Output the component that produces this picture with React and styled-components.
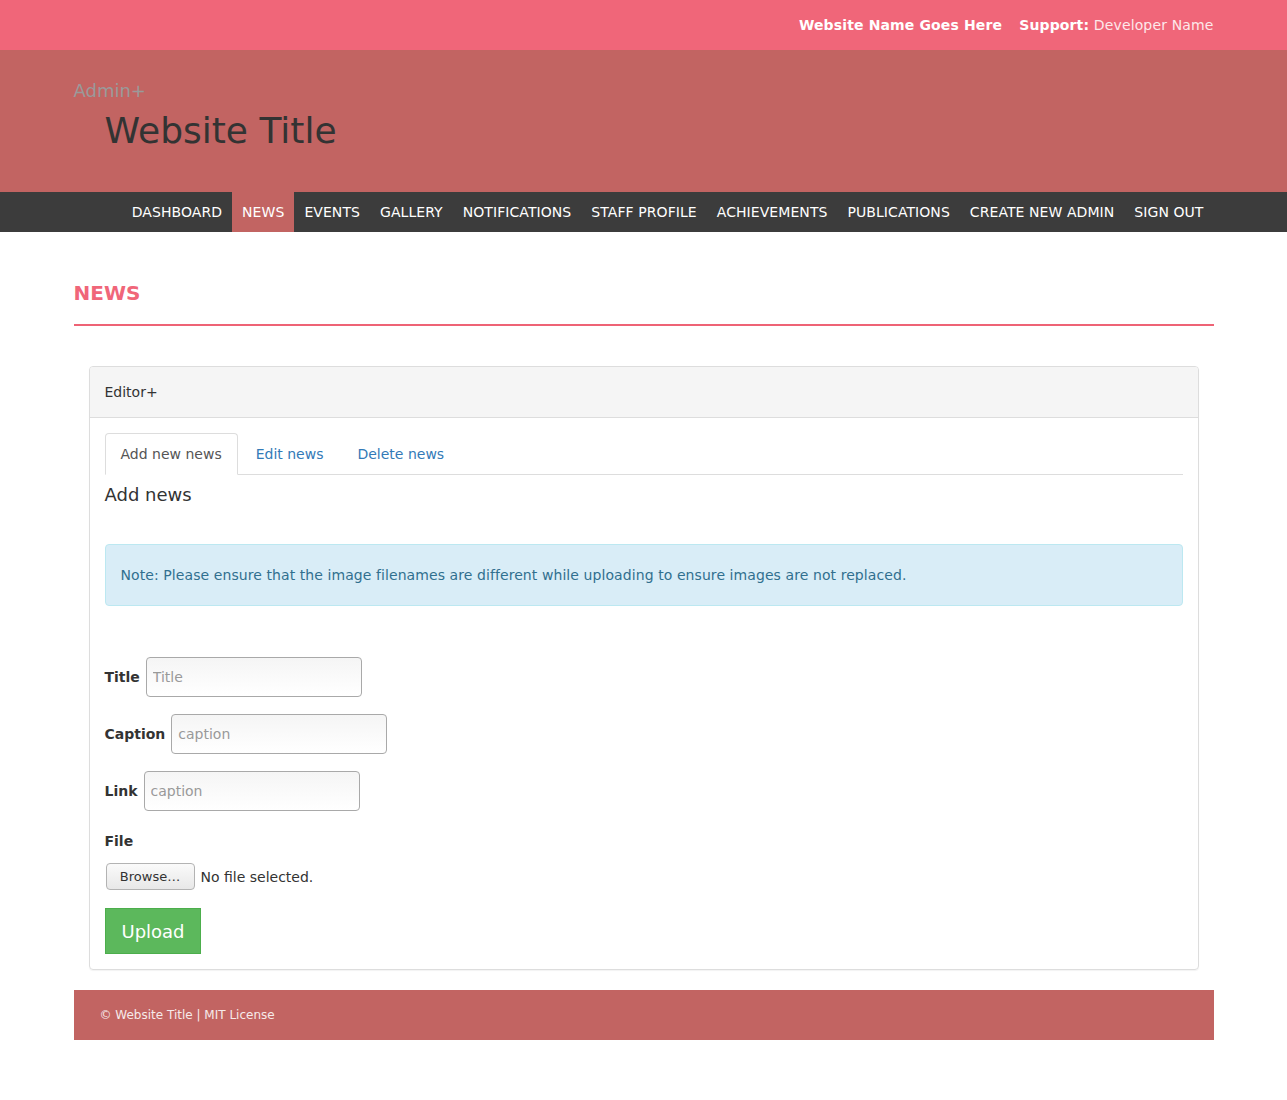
import React from 'react';
import styled, { createGlobalStyle } from 'styled-components';

const GlobalStyle = createGlobalStyle`
  body {
    margin: 0;
    font-family: "DejaVu Sans", "Liberation Sans", sans-serif;
    font-size: 14px;
    color: #333;
    background: #fff;
  }
  * { box-sizing: border-box; }
`;

const Container = styled.div`
  width: 1140px;
  margin: 0 auto;
`;

const TopBar = styled.div`
  background: #f06679;
  height: 50px;
`;

const TopBarInner = styled(Container)`
  height: 100%;
  display: flex;
  align-items: center;
  justify-content: flex-end;
  gap: 17px;
  color: #fff;
  font-size: 14px;
  letter-spacing: 0.14px;
`;

const TopItem = styled.span`
  font-weight: ${p => (p.$bold ? 'bold' : 'normal')};
  b { font-weight: bold; }
  em { font-style: normal; color: #fde8ea; }
`;

const Header = styled.header`
  background: #c26462;
  height: 142px;
`;

const HeaderInner = styled(Container)`
  padding-top: 30px;
`;

const Brand = styled.div`
  font-size: 18px;
  line-height: 22px;
  color: #9a9a9a;
`;

const SiteTitle = styled.h1`
  margin: 9px 0 0 31px;
  font-size: 36px;
  line-height: 40px;
  font-weight: normal;
  color: #333;
`;

const NavBar = styled.nav`
  background: #3c3c3c;
  height: 40px;
`;

const NavList = styled(Container)`
  display: flex;
  justify-content: flex-end;
  height: 100%;
`;

const NavItem = styled.a`
  display: flex;
  align-items: center;
  padding: 0 10px 1px;
  color: #fff;
  text-decoration: none;
  font-size: 14px;
  letter-spacing: 0.07px;
  background: ${p => (p.$active ? '#c26462' : 'transparent')};
`;

const Main = styled(Container)`
  padding-top: 49px;
`;

const PageHeading = styled.h2`
  margin: 0;
  font-size: 20px;
  line-height: 24px;
  font-weight: bold;
  color: #f06679;
  padding-bottom: 19px;
  border-bottom: 2px solid #ee6375;
`;

const Panel = styled.section`
  margin: 40px 15px 0;
  border: 1px solid #ddd;
  border-radius: 4px;
  box-shadow: 0 1px 1px rgba(0, 0, 0, 0.05);
`;

const PanelHeading = styled.div`
  background: #f5f5f5;
  border-bottom: 1px solid #ddd;
  padding: 15px;
  line-height: 20px;
  font-size: 14px;
  border-radius: 3px 3px 0 0;
`;

const PanelBody = styled.div`
  padding: 15px;
`;

const Tabs = styled.div`
  display: flex;
  gap: 2px;
  border-bottom: 1px solid #ddd;
`;

const Tab = styled.a`
  padding: 10px 15px;
  line-height: 20px;
  margin-bottom: -1px;
  border: 1px solid ${p => (p.$active ? '#ddd' : 'transparent')};
  border-bottom-color: ${p => (p.$active ? '#fff' : 'transparent')};
  border-radius: 4px 4px 0 0;
  color: ${p => (p.$active ? '#555' : '#337ab7')};
  background: ${p => (p.$active ? '#fff' : 'transparent')};
  text-decoration: none;
`;

const SubHeading = styled.h3`
  margin: 9px 0 0;
  font-size: 18px;
  line-height: 22px;
  font-weight: normal;
`;

const Alert = styled.div`
  margin-top: 38px;
  padding: 20px 15px;
  line-height: 20px;
  background: #d9edf7;
  border: 1px solid #bce8f1;
  border-radius: 4px;
  color: #31708f;
  letter-spacing: 0.08px;
`;

const Form = styled.form`
  margin-top: 51px;
  display: flex;
  flex-direction: column;
  align-items: flex-start;
`;

const FieldRow = styled.div`
  display: flex;
  align-items: center;
  gap: 6px;
  margin-bottom: 17px;
`;

const Label = styled.label`
  font-weight: bold;
  line-height: 20px;
`;

const TextInput = styled.input`
  width: 216px;
  height: 40px;
  padding: 0 6px;
  border: 1px solid #a9a9a9;
  border-radius: 4px;
  background: linear-gradient(#f5f5f5, #fff);
  font: inherit;
  color: #555;
  &::placeholder { color: #999; }
`;

const FileLabel = styled(Label)`
  margin-top: 3px;
`;

const FileRow = styled.div`
  display: flex;
  align-items: center;
  gap: 6px;
  margin-top: 12px;
`;

const BrowseButton = styled.button`
  margin-left: 1px;
  width: 89px;
  height: 27px;
  border: 1px solid #b3b3b3;
  border-radius: 4px;
  background: linear-gradient(#fafafa, #e8e8e8);
  font: 13px "DejaVu Sans", sans-serif;
  color: #333;
  padding: 0;
`;

const UploadButton = styled.button`
  margin-top: 18px;
  width: 96px;
  height: 46px;
  background: #5cb85c;
  border: 1px solid #4cae4c;
  color: #fff;
  font: 18px "DejaVu Sans", sans-serif;
  padding: 0 0 0 1px;
`;

const Footer = styled(Container)`
  margin-top: 20px;
  margin-bottom: 60px;
  height: 50px;
  background: #c26462;
  display: flex;
  align-items: center;
  padding-left: 26px;
  font-size: 12px;
  color: #f6eaea;
`;

const navItems = [
  'DASHBOARD', 'NEWS', 'EVENTS', 'GALLERY', 'NOTIFICATIONS', 'STAFF PROFILE',
  'ACHIEVEMENTS', 'PUBLICATIONS', 'CREATE NEW ADMIN', 'SIGN OUT',
];

export default function App() {
  return (
    <>
      <GlobalStyle />
      <TopBar>
        <TopBarInner>
          <TopItem $bold>Website Name Goes Here</TopItem>
          <TopItem><b>Support:</b> <em>Developer Name</em></TopItem>
        </TopBarInner>
      </TopBar>
      <Header>
        <HeaderInner>
          <Brand>Admin+</Brand>
          <SiteTitle>Website Title</SiteTitle>
        </HeaderInner>
      </Header>
      <NavBar>
        <NavList>
          {navItems.map(item => (
            <NavItem key={item} href="#" $active={item === 'NEWS'}>{item}</NavItem>
          ))}
        </NavList>
      </NavBar>
      <Main>
        <PageHeading>NEWS</PageHeading>
        <Panel>
          <PanelHeading>Editor+</PanelHeading>
          <PanelBody>
            <Tabs>
              <Tab href="#" $active>Add new news</Tab>
              <Tab href="#">Edit news</Tab>
              <Tab href="#">Delete news</Tab>
            </Tabs>
            <SubHeading>Add news</SubHeading>
            <Alert>
              Note: Please ensure that the image filenames are different while uploading to ensure images are not replaced.
            </Alert>
            <Form onSubmit={e => e.preventDefault()}>
              <FieldRow>
                <Label>Title</Label>
                <TextInput placeholder="Title" />
              </FieldRow>
              <FieldRow>
                <Label>Caption</Label>
                <TextInput placeholder="caption" />
              </FieldRow>
              <FieldRow>
                <Label>Link</Label>
                <TextInput placeholder="caption" />
              </FieldRow>
              <FileLabel>File</FileLabel>
              <FileRow>
                <BrowseButton type="button">Browse…</BrowseButton>
                <span>No file selected.</span>
              </FileRow>
              <UploadButton type="submit">Upload</UploadButton>
            </Form>
          </PanelBody>
        </Panel>
      </Main>
      <Footer>© Website Title | MIT License</Footer>
    </>
  );
}
